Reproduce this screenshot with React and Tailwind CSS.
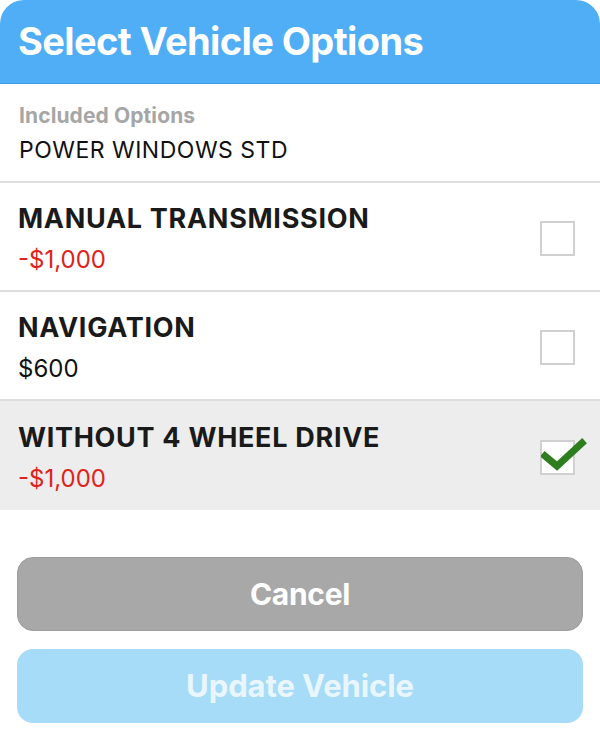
import React from 'react';

const options = [
  { name: 'MANUAL TRANSMISSION', price: '-$1,000', negative: true, checked: false },
  { name: 'NAVIGATION', price: '$600', negative: false, checked: false },
  { name: 'WITHOUT 4 WHEEL DRIVE', price: '-$1,000', negative: true, checked: true },
];

const Checkbox = ({ checked }) => (
  <div className="relative mt-[3px] w-[35px] h-[35px] border-2 border-[#d0d0d0] bg-white">
    {checked && (
      <svg className="absolute -top-[4px] -left-[1px] w-[46px] h-[40px]" viewBox="0 0 46 40">
        <path d="M4 18 L16 28 L41 5" fill="none" stroke="#2e7d1e" strokeWidth="7" strokeLinecap="square" />
      </svg>
    )}
  </div>
);

const App = () => {
  return (
    <div className="w-[600px] h-[740px] bg-white overflow-hidden" style={{ fontFamily: 'Inter, "Noto Sans", sans-serif' }}>
      <div className="h-[84px] bg-[#4faef5] rounded-t-[24px] border-b border-[#3f9fe6] flex items-center px-[18px]">
        <h1 className="text-[38px] font-bold text-white tracking-[-0.6px] leading-none -mt-[1px]">Select Vehicle Options</h1>
      </div>

      <div className="h-[99px] px-[19px] pt-[20px] border-b-2 border-[#dddddd]">
        <p className="text-[21px] font-bold text-[#a6a6a6] tracking-[0.1px] leading-[24px]">Included Options</p>
        <p className="text-[23px] text-[#111] mt-[8px] leading-[28px] tracking-[0.5px]">POWER WINDOWS STD</p>
      </div>

      {options.map((o, i) => (
        <div
          key={o.name}
          className={`h-[109px] flex items-center justify-between pl-[18px] pr-[25px] ${i < options.length - 1 ? 'border-b-2 border-[#dddddd]' : ''} ${o.checked ? 'bg-[#ededed]' : 'bg-white'}`}
        >
          <div className="mt-[4px]">
            <p className="text-[27px] font-bold text-[#1a1a1a] tracking-[0.7px] leading-[32px]">{o.name}</p>
            <p className={`text-[24px] mt-[11px] leading-[28px] ${o.negative ? 'text-[#e0231a]' : 'text-[#111]'}`}>{o.price}</p>
          </div>
          <Checkbox checked={o.checked} />
        </div>
      ))}

      <div className="px-[17px] pt-[47px] flex flex-col gap-[18px]">
        <button className="h-[74px] w-full rounded-[16px] bg-[#a8a8a8] border border-[#9c9c9c] text-white text-[30px] font-bold tracking-[-0.3px]">
          Cancel
        </button>
        <button className="h-[74px] w-full rounded-[16px] bg-[#a6dcf8] text-[#eaf6fd] text-[31px] font-bold tracking-[-0.1px]">
          Update Vehicle
        </button>
      </div>
    </div>
  );
};

export default App;
